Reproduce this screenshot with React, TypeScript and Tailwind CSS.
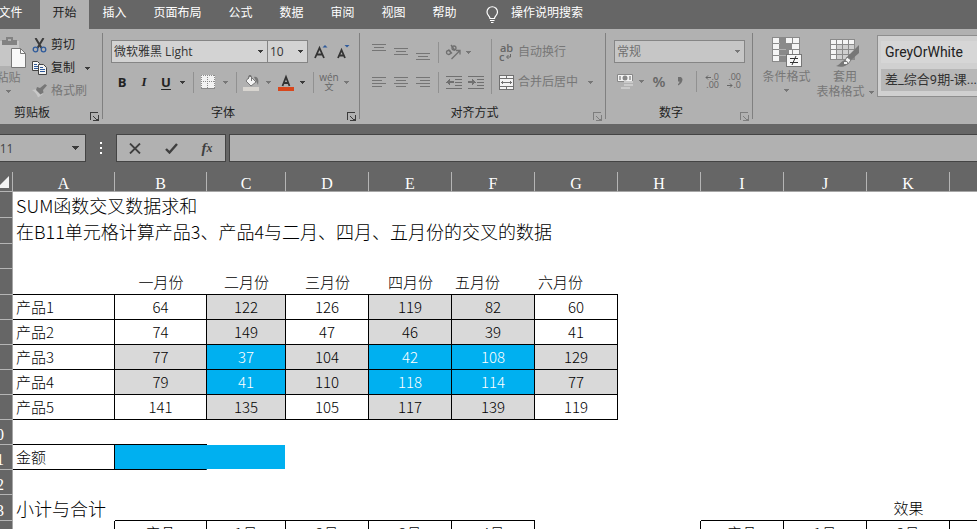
import type { ReactNode } from "react";

type Tone = "plain" | "gray" | "blue";

function Arrow({ muted = false }: { muted?: boolean }) {
  return (
    <svg width="5" height="3" viewBox="0 0 5 3" shapeRendering="crispEdges" className={`shrink-0 ${muted ? "text-[#777]" : "text-[#3b3b3b]"}`} aria-hidden="true">
      <path d="M0 0h5v1H4v1H3v1H2V2H1V1H0z" fill="currentColor" />
    </svg>
  );
}

function Tool({ label, className, children }: { label: string; className: string; children: ReactNode }) {
  return (
    <button type="button" aria-label={label} className={`flex h-6 shrink-0 items-center justify-center ${className}`}>
      {children}
    </button>
  );
}

function Divider() {
  return <div className="mt-1 mb-[5px] w-px shrink-0 bg-[#808080]" />;
}

function Sep() {
  return <div className="h-[21px] w-px shrink-0 bg-[#919191]" />;
}

function Launcher({ label, muted = false }: { label: string; muted?: boolean }) {
  return (
    <button type="button" aria-label={label} className={`flex h-4 w-4 items-end justify-center ${muted ? "text-[#7d7d7d]" : "text-[#3b3b3b]"}`}>
      <svg width="9" height="9" viewBox="0 0 9 9" shapeRendering="crispEdges" fill="currentColor" aria-hidden="true">
        <path d="M0 0h8v1H1v7H0zM8 3h1v6H3V8h3V7H5V6H4V5H3V4h1v1h1v1h1v1h2z" />
      </svg>
    </button>
  );
}

function Group({ title, className, muted = false, children }: { title: string; className: string; muted?: boolean; children: ReactNode }) {
  return (
    <section aria-label={title} className={`flex h-[95px] shrink-0 flex-col ${className}`}>
      <div className="h-[74px]">{children}</div>
      <div className="flex h-5 items-center">
        <h2 className="flex-1 text-center">{title}</h2>
        <Launcher label={`${title}设置`} muted={muted} />
      </div>
    </section>
  );
}

function Picker({ label, value, className, muted = false }: { label: string; value: string; className: string; muted?: boolean }) {
  return (
    <div className={`relative h-[23px] shrink-0 border border-[#858585] ${muted ? "bg-[#c6c6c6] text-[#707070]" : "bg-[#d3d3d3] text-[#333]"} ${className}`}>
      <select aria-label={label} className="h-full w-full appearance-none pl-0.5 text-[12px]" defaultValue={value}>
        <option>{value}</option>
      </select>
      <span className="pointer-events-none absolute top-[9px] right-1">
        <Arrow muted={muted} />
      </span>
    </div>
  );
}

function Lines({ rows }: { rows: [number, number, number][] }) {
  return (
    <svg width="14" height="16" viewBox="0 0 14 16" shapeRendering="crispEdges" fill="#757575" aria-hidden="true">
      {rows.map(([x, y, w]) => (
        <rect key={y} x={x} y={y} width={w} height="1" />
      ))}
    </svg>
  );
}

function ClipboardGroup() {
  return (
    <Group title="剪贴板" className="-ml-[22px] w-[124px]">
      <div className="flex pt-2">
        <button type="button" className="flex w-[50px] shrink-0 flex-col items-center pl-[11px] text-[#777]">
          <svg width="36" height="31" viewBox="0 0 36 31" className="shrink-0" aria-hidden="true">
            <path d="M2 4h26v25H2z" fill="#c6c6c6" />
            <path d="M11 3h4V0h7v3h4v5H11z" fill="#828282" />
            <path d="M17 2h3v2h-3z" fill="#b1b1b1" />
            <path d="M20.500 11.500h9l5 5v14h-14z" fill="#f8f8f8" stroke="#777" />
            <path d="M29.500 11.500v5h5" fill="none" stroke="#777" />
          </svg>
          <span className="mt-0.5 leading-4">粘贴</span>
          <span className="mt-1"><Arrow muted /></span>
        </button>
        <div className="flex flex-col gap-[7px] pl-1">
          <button type="button" className="flex h-4 items-center gap-1">
            <svg width="15" height="15" viewBox="0 0 15 15" aria-hidden="true">
              <path d="M3.500 0 9.500 10M11.500 0l-6 10" stroke="#3b3b3b" strokeWidth="2" fill="none" />
              <circle cx="3.500" cy="11.500" r="2.300" fill="none" stroke="#2f5b9b" strokeWidth="1.300" />
              <circle cx="11.500" cy="11.500" r="2.300" fill="none" stroke="#2f5b9b" strokeWidth="1.300" />
            </svg>
            剪切
          </button>
          <button type="button" className="flex h-4 items-center gap-1">
            <svg width="15" height="14" viewBox="0 0 15 14" aria-hidden="true">
              <path d="M.5.500h5l2 2v7h-7z" fill="#f5f5f5" stroke="#444" />
              <path d="M2 3.500h3M2 5.500h4M2 7.500h4" stroke="#2f5b9b" />
              <path d="M6.500 3.500h5l3 3v7h-8z" fill="#f5f5f5" stroke="#444" />
              <path d="M8 6.500h3M8 8.500h5M8 10.500h5" stroke="#2f5b9b" />
            </svg>
            复制
            <span className="pl-[6px]"><Arrow /></span>
          </button>
          <button type="button" className="flex h-4 items-center gap-1 text-[#777]">
            <svg width="15" height="14" viewBox="0 0 15 14" aria-hidden="true">
              <path d="m0 6 6-1 5 5-5 3.500C5 10 3 8 0 6z" fill="#c8c8c8" />
              <path d="m5 3 3 1 5-4 2 1.500-4 4.500.500 2.500-3 2L4 6z" fill="#777" />
            </svg>
            格式刷
          </button>
        </div>
      </div>
    </Group>
  );
}

function FontGroup() {
  return (
    <Group title="字体" className="w-64">
      <div className="flex pt-[11px] pl-2">
        <Picker label="字体名称" value="微软雅黑 Light" className="w-[157px]" />
        <Picker label="字号" value="10" className="-ml-px w-[41px]" />
        <Tool label="增大字号" className="ml-0.5 w-[22px]">
          <svg width="14" height="16" viewBox="0 0 14 16" aria-hidden="true">
            <path d="M1 14 5.500 4 10 14M2.700 10.500h5.600" fill="none" stroke="#333" strokeWidth="1.800" />
            <path d="M8.500 3.500 11 1l2.500 2.500z" fill="#2f5b9b" />
          </svg>
        </Tool>
        <Tool label="减小字号" className="w-[22px]">
          <svg width="14" height="16" viewBox="0 0 14 16" aria-hidden="true">
            <path d="M2 14 5.500 6 9 14M3.500 11.500h4" fill="none" stroke="#333" strokeWidth="1.800" />
            <path d="M8.500 1H13.500L11 3.500z" fill="#2f5b9b" />
          </svg>
        </Tool>
      </div>
      <div className="mt-[6px] flex items-center pl-2 font-['Open_Sans',sans-serif] text-[13px] text-[#222]">
        <Tool label="加粗" className="w-[22px] font-bold">B</Tool>
        <Tool label="倾斜" className="w-[22px] font-['Liberation_Serif',serif] font-bold italic">I</Tool>
        <Tool label="下划线" className="w-[22px] font-bold underline underline-offset-2">U</Tool>
        <Tool label="下划线样式" className="w-[11px]"><Arrow /></Tool>
        <span className="w-[5px]" />
        <Sep />
        <Tool label="边框" className="w-[28px]">
          <svg width="14" height="14" viewBox="0 0 14 14" shapeRendering="crispEdges" aria-hidden="true">
            <path d="M0 0h14v13H0z" fill="#f3f3f3" />
            <path d="M0 .5h14M0 6.500h14M.5 0v13M6.500 0v13M13.500 0v13" stroke="#8b8b8b" strokeDasharray="1 1" />
            <path d="M0 13h14v1H0z" fill="#8b8b8b" />
          </svg>
        </Tool>
        <Tool label="边框样式" className="w-[7px]"><Arrow muted /></Tool>
        <span className="w-[7px]" />
        <Sep />
        <Tool label="填充颜色" className="w-[28px]">
          <svg width="17" height="17" viewBox="0 0 17 17" aria-hidden="true">
            <path d="M0 13h16v4H0z" fill="#d8d5d0" />
            <path d="m7 2 6 6-5 4-5-5z" fill="#f3f3f3" stroke="#777" />
            <path d="M5.500 5V2.500C5.500 1 8.500 1 8.500 2.500V7" fill="none" stroke="#777" />
            <path d="M11 3c4-1 5 3 4 8l-2-4z" fill="#777" />
          </svg>
        </Tool>
        <Tool label="填充颜色选项" className="w-[7px]"><Arrow muted /></Tool>
        <Tool label="字体颜色" className="w-[28px]">
          <svg width="16" height="17" viewBox="0 0 16 17" aria-hidden="true">
            <path d="M4.500 12 8 3l3.500 9M5.500 9h5" fill="none" stroke="#333" strokeWidth="1.800" />
            <path d="M0 13h16v4H0z" fill="#d8471c" />
          </svg>
        </Tool>
        <Tool label="字体颜色选项" className="w-[5px]"><Arrow /></Tool>
        <span className="w-2" />
        <Sep />
        <Tool label="显示拼音" className="w-[30px] flex-col text-[#666]">
          <span className="text-[10px] leading-[10px]">wén</span>
          <span className="font-['Noto_Sans_CJK_SC',sans-serif] text-[9px] leading-[10px]">文</span>
        </Tool>
        <Arrow muted />
      </div>
    </Group>
  );
}

function AlignGroup() {
  return (
    <Group title="对齐方式" className="w-[245px]" muted>
      <div className="flex text-[#777]">
        <div className="w-[131px] pt-[11px] pl-2">
          <div className="flex items-center">
            <Tool label="顶端对齐" className="w-[22px]"><Lines rows={[[0, 0, 14], [2, 3, 10], [0, 6, 14]]} /></Tool>
            <Tool label="垂直居中" className="w-[22px]"><Lines rows={[[0, 4, 14], [2, 7, 10], [0, 10, 14]]} /></Tool>
            <Tool label="底端对齐" className="w-[22px]"><Lines rows={[[0, 9, 14], [2, 12, 10], [0, 15, 14]]} /></Tool>
            <span className="w-1" />
            <Sep />
            <Tool label="方向" className="w-[27px]">
              <svg width="18" height="18" viewBox="0 0 18 18" className="overflow-visible" fill="none" stroke="#707070" strokeWidth="1.300" aria-hidden="true">
                <circle cx="4.500" cy="9.500" r="2" />
                <path d="m4.500 6.500 3.500 4M7 2l4 5.500" />
                <circle cx="10" cy="5" r="2" />
                <path d="m7.500 16 8-8M12 7.500h4v4" />
              </svg>
            </Tool>
            <Arrow muted />
          </div>
          <div className="mt-1.5 flex items-center">
            <Tool label="左对齐" className="w-[22px]"><Lines rows={[[0, 3, 14], [0, 6, 10], [0, 9, 14], [0, 12, 10]]} /></Tool>
            <Tool label="居中" className="w-[22px]"><Lines rows={[[0, 3, 14], [2, 6, 10], [0, 9, 14], [2, 12, 10]]} /></Tool>
            <Tool label="右对齐" className="w-[22px]"><Lines rows={[[0, 3, 14], [4, 6, 10], [0, 9, 14], [4, 12, 10]]} /></Tool>
            <span className="w-1" />
            <Sep />
            <span className="w-1" />
            <Tool label="减少缩进量" className="w-[22px]">
              <svg width="16" height="13" viewBox="0 0 16 13" shapeRendering="crispEdges" fill="#707070" aria-hidden="true">
                <path d="M0 0h16v1H0zM9 3h7v1H9zM9 6h7v1H9zM9 9h7v1H9zM0 12h16v1H0zM0 6h1V5h1V4h1V3h1v2h4v2H4v2H3V8H2V7H0z" />
              </svg>
            </Tool>
            <Tool label="增加缩进量" className="w-[22px]">
              <svg width="16" height="13" viewBox="0 0 16 13" shapeRendering="crispEdges" fill="#707070" aria-hidden="true">
                <path d="M0 0h16v1H0zM9 3h7v1H9zM9 6h7v1H9zM9 9h7v1H9zM0 12h16v1H0zM8 6H7V5H6V4H5V3H4v2H0v2h4v2h1V8h1V7h2z" />
              </svg>
            </Tool>
          </div>
        </div>
        <div className="mt-[10px] h-[55px] w-px bg-[#919191]" />
        <div className="flex flex-1 flex-col gap-1.5 pt-[11px] pl-[7px]">
          <button type="button" className="flex h-6 items-center gap-1">
            <span className="w-[15px] font-['Open_Sans',sans-serif] text-[11px] leading-[9px] font-semibold text-[#666]">
              <span className="block">ab</span>
              <span className="flex items-center gap-0.5">c
                <svg width="5" height="5" viewBox="0 0 5 5" aria-hidden="true"><path d="M4.500 0v3H1M2.500 1 .5 3l2 2" fill="none" stroke="#666" /></svg>
              </span>
            </span>
            自动换行
          </button>
          <button type="button" className="flex h-6 items-center gap-1">
            <svg width="15" height="15" viewBox="0 0 15 15" shapeRendering="crispEdges" aria-hidden="true">
              <path d="M.5.500h14v14H.5z" fill="#f4f4f4" stroke="#707070" />
              <path d="M0 3.500h15M0 11.500h15M7.500 0v3M7.500 11v4M2 7.500h11M3.500 6v3M11.500 6v3" stroke="#707070" />
            </svg>
            合并后居中
            <span className="pl-[6px]"><Arrow muted /></span>
          </button>
        </div>
      </div>
    </Group>
  );
}

function DecimalArrow({ right = false }: { right?: boolean }) {
  return (
    <svg width="6" height="5" viewBox="0 0 6 5" fill="none" stroke="#666" aria-hidden="true">
      <path d={right ? "M0 2.500h5M3 .5l2 2-2 2" : "M6 2.500H1M3 .5l-2 2 2 2"} />
    </svg>
  );
}

function NumberGroup() {
  return (
    <Group title="数字" className="w-[146px]" muted>
      <div className="px-2 pt-[11px]">
        <Picker label="数字格式" value="常规" className="w-[131px]" muted />
      </div>
      <div className="mt-[6px] flex items-center pl-2 font-['Open_Sans',sans-serif] text-[#666]">
        <Tool label="会计数字格式" className="w-[22px]">
          <svg width="17" height="17" viewBox="0 0 17 17" aria-hidden="true">
            <path d="M.5 1.500h15v7H.5z" fill="#f4f4f4" stroke="#888" />
            <circle cx="8" cy="5" r="2.500" fill="#888" />
            <path d="M2 3h2v4H2zM12 3h2v4h-2z" fill="#aaa" />
            <path d="M7 8h9v2H7zM7 11h9v2H7zM4 14h9v2H4z" fill="#cacaca" />
          </svg>
        </Tool>
        <Tool label="会计格式选项" className="w-[11px]"><Arrow muted /></Tool>
        <Tool label="百分比样式" className="ml-[3px] w-[18px] text-[15px] font-semibold">%</Tool>
        <Tool label="千位分隔样式" className="ml-px w-[22px]">
          <svg width="6" height="9" viewBox="0 0 6 9" aria-hidden="true">
            <path d="M1 0h3l1.500 2C5.500 5 4 7 1 8.500V7c1-.7 1.500-1.500 1.500-2.500H1z" fill="#707070" />
          </svg>
        </Tool>
        <span className="w-[5px]" />
        <Sep />
        <Tool label="增加小数位数" className="w-[22px] flex-col text-[9px] leading-[8px]">
          <span className="flex w-full items-center justify-end"><DecimalArrow />.0</span>
          <span className="block w-full text-right">.00</span>
        </Tool>
        <Tool label="减少小数位数" className="w-[22px] flex-col text-[9px] leading-[8px]">
          <span className="block w-full text-right">.00</span>
          <span className="flex w-full items-center justify-end"><DecimalArrow right />.0</span>
        </Tool>
      </div>
    </Group>
  );
}

function StylesGroup() {
  return (
    <section aria-label="样式" className="flex min-w-0 flex-1 text-[#777]">
      <button type="button" className="ml-[7px] flex w-[53px] shrink-0 flex-col items-center pt-2">
        <svg width="32" height="32" viewBox="0 0 32 32" shapeRendering="crispEdges" className="shrink-0" aria-hidden="true">
          <path d="M1 0h28v25H1z" fill="#8a8a8a" />
          <path d="M2 1h6v5H2zM2 7h6v5H2zM2 13h6v5H2zM2 19h6v5H2zM15 1h6v5h-6zM22 1h6v5h-6zM21 7h7v5h-7zM18 13h3v5h-3zM22 13h6v5h-6z" fill="#f5f5f5" />
          <path d="M8 6h1v1H8zM8 12h7v1H8zM8 18h7v1H8z" fill="#b1b1b1" />
          <path d="M15.500 17.500h15v12h-15z" fill="#f8f8f8" stroke="#777" />
          <path d="M19 21.500h8M19 25.500h8" stroke="#333" />
          <path d="m25 19-4 9" stroke="#333" shapeRendering="auto" />
        </svg>
        <span className="leading-4">条件格式</span>
        <span className="mt-1"><Arrow muted /></span>
      </button>
      <button type="button" className="ml-0.5 flex w-[60px] shrink-0 flex-col items-center pt-2">
        <svg width="30" height="32" viewBox="0 0 30 32" className="shrink-0" aria-hidden="true">
          <path d="M0 2h25v21H0z" fill="#8a8a8a" />
          <path d="M1 3h5v4H1zM7 3h5v4H7zM13 3h5v4h-5zM19 3h5v4h-5zM1 8h5v4H1zM1 13h5v4H1zM1 18h5v4H1z" fill="#f5f5f5" />
          <path d="M7 8h5v4H7zM13 8h5v4h-5zM19 8h5v4h-5zM7 13h5v4H7zM13 13h5v4h-5zM19 13h5v4h-5zM7 18h5v4H7zM13 18h5v4h-5z" fill="#cfcfcf" />
          <path d="M29 8v8l-8 7-4-3z" fill="#777" />
          <path d="m17 20 4 3-3 4h-5z" fill="#f4f4f4" stroke="#777" />
          <path d="M6 29c4-1 5-5 9-6l3 2c0 4-6 6-12 4z" fill="#777" />
          <path d="M14 25h3v2h-3z" fill="#f4f4f4" />
        </svg>
        <span className="leading-4">套用</span>
        <span className="flex items-center gap-1 leading-[14px] whitespace-nowrap">表格格式 <Arrow muted /></span>
      </button>
      <div className="mt-1.5 ml-0.5 flex h-[62px] min-w-0 flex-1 flex-col gap-[6px] overflow-hidden border border-r-0 border-[#8e8e8e] bg-[#d0d0d0] py-[5px] pl-[3px] font-['Roboto','Noto_Sans_CJK_SC',sans-serif] text-[14px] whitespace-nowrap text-[#222]">
        <button type="button" className="h-[22px] shrink-0 bg-[#d6d6d6] pl-1 text-left">GreyOrWhite</button>
        <button type="button" className="h-[22px] shrink-0 bg-[#b7b7b7] pl-1 text-left text-[13px] text-[#333]">差_综合9期-课...</button>
      </div>
    </section>
  );
}

function Tabs() {
  const tabs: [string, string][] = [
    ["插入", "w-[51px]"],
    ["页面布局", "w-[75px]"],
    ["公式", "w-[51px]"],
    ["数据", "w-[51px]"],
    ["审阅", "w-[51px]"],
    ["视图", "w-[51px]"],
    ["帮助", "w-[51px]"],
  ];
  return (
    <nav className="flex h-[29px] items-stretch pb-[3px] text-white">
      <button type="button" className="-ml-5 w-[60px] shrink-0 pl-px text-center">文件</button>
      <button type="button" className="-mb-[3px] w-[49px] shrink-0 bg-[#b1b1b1] pb-[3px] text-[#222]">开始</button>
      {tabs.map(([name, width]) => (
        <button type="button" key={name} className={`shrink-0 ${width}`}>{name}</button>
      ))}
      <label className="ml-4 flex flex-1 items-center gap-3">
        <svg width="13" height="18" viewBox="0 0 13 18" fill="none" stroke="#fff" aria-hidden="true" className="mt-[3px] shrink-0">
          <path d="M4 12.500c0-2.500-3-3-3-6.500a5.200 5.200 0 0 1 10.500 0c0 3.500-3 4-3 6.500zM4 14.500h4.500M5 16.500h2.500" strokeWidth="1.200" />
        </svg>
        <input aria-label="操作说明搜索" placeholder="操作说明搜索" className="w-full min-w-0 bg-transparent placeholder:text-white" />
      </label>
    </nav>
  );
}

function FormulaBar() {
  return (
    <div className="flex h-12 pt-[10px]">
      <div className="relative -ml-[22px] h-7 w-[108px] shrink-0 border border-[#444] bg-[#b1b1b1]">
        <input aria-label="名称框" defaultValue="B11" className="h-full w-full bg-transparent pl-[13px] font-['Open_Sans',sans-serif] text-[12px] text-[#444]" />
        <svg width="7" height="4" viewBox="0 0 7 4" shapeRendering="crispEdges" className="absolute top-[11px] right-[6px]" aria-hidden="true">
          <path d="M0 0h7v1H6v1H5v1H4v1H3V3H2V2H1V1H0z" fill="#3b3b3b" />
        </svg>
      </div>
      <div className="flex h-7 w-[30px] shrink-0 flex-col items-center justify-center gap-[3px]">
        <i className="h-0.5 w-0.5 bg-white" />
        <i className="h-0.5 w-0.5 bg-white" />
        <i className="h-0.5 w-0.5 bg-white" />
      </div>
      <div className="mr-[3px] flex h-7 shrink-0 items-center border border-[#444] bg-[#b1b1b1]">
        <Tool label="取消" className="w-9">
          <svg width="12" height="11" viewBox="0 0 12 11" aria-hidden="true"><path d="m1 .5 10 10M11 .5l-10 10" stroke="#3f3f3f" strokeWidth="1.800" /></svg>
        </Tool>
        <Tool label="输入" className="w-9">
          <svg width="13" height="11" viewBox="0 0 13 11" aria-hidden="true"><path d="m1 6 3.500 3.500L12 1" fill="none" stroke="#3f3f3f" strokeWidth="2.400" /></svg>
        </Tool>
        <Tool label="插入函数" className="w-9 font-['Liberation_Serif',serif] text-[15px] font-bold text-[#3f3f3f] italic">
          f<sub className="bottom-0 text-[12px]">x</sub>
        </Tool>
      </div>
      <input aria-label="编辑栏" className="h-7 min-w-0 flex-1 border border-r-0 border-[#444] bg-[#b1b1b1] px-2" />
    </div>
  );
}

const columns = ["A", "B", "C", "D", "E", "F", "G", "H", "I", "J", "K"];
const widths = ["w-[102px]", "w-[92px]", "w-[79px]", "w-[83px]", "w-[83px]", "w-[83px]", "w-[83px]", "w-[83px]", "w-[83px]", "w-[83px]", "w-[83px]"];
const months = ["一月份", "二月份", "三月份", "四月份", "五月份", "六月份"];
const products: [string, number[]][] = [
  ["产品1", [64, 122, 126, 119, 82, 60]],
  ["产品2", [74, 149, 47, 46, 39, 41]],
  ["产品3", [77, 37, 104, 42, 108, 129]],
  ["产品4", [79, 41, 110, 118, 114, 77]],
  ["产品5", [141, 135, 105, 117, 139, 119]],
];
const tones: Record<Tone, string> = {
  plain: "bg-white",
  gray: "bg-[#d9d9d9]",
  blue: "bg-[#00b0f0] text-white",
};

function toneOf(row: number, col: number): Tone {
  const inRow = row === 2 || row === 3;
  const inCol = col === 1 || col === 3 || col === 4;
  if (inRow && inCol) return "blue";
  return inRow || inCol ? "gray" : "plain";
}

function RowHead({ n }: { n?: number }) {
  return (
    <th scope="row" className="border-r border-b border-r-[#a6a6a6] border-b-[#b5b5b5] bg-[#666] p-0 align-bottom font-['Liberation_Serif',serif] text-[16px] leading-[18px] font-normal text-white">
      {n && <div className="flex justify-end overflow-hidden pr-2">{n}</div>}
    </th>
  );
}

function Sheet() {
  const line = "border-r border-b border-black";
  const summary = ["产品", "1月", "2月", "3月", "4月"];
  return (
    <table className="w-full table-fixed border-separate border-spacing-0 bg-white font-['Noto_Sans_CJK_SC',sans-serif] text-[15px] leading-5 font-light whitespace-nowrap text-black">
      <colgroup>
        <col className="w-[13px]" />
        {columns.map((c, i) => <col key={c} className={widths[i]} />)}
        <col />
      </colgroup>
      <thead>
        <tr className="h-5 bg-[#666] text-white">
          <td className="border-r border-b border-[#b5b5b5] p-0 align-bottom">
            <svg width="9" height="12" viewBox="0 0 9 12" className="mb-[3px] block" aria-hidden="true"><path d="M9 0v12H0V9z" fill="#f3f3f3" /></svg>
          </td>
          {columns.map((c) => (
            <th key={c} scope="col" className="border-r border-b border-r-[#b5b5b5] border-b-[#a6a6a6] p-0 pt-1 font-['Liberation_Serif',serif] text-[16px] leading-[15px] font-normal">{c}</th>
          ))}
          <td className="border-b border-[#a6a6a6] p-0" />
        </tr>
      </thead>
      <tbody>
        <tr className="h-[26px] text-[18px]"><RowHead /><td className="py-0 pr-0 pl-[3px]">SUM函数交叉数据求和</td></tr>
        <tr className="h-[26px] text-[18px]"><RowHead /><td className="py-0 pr-0 pl-[3px]">在B11单元格计算产品3、产品4与二月、四月、五月份的交叉的数据</td></tr>
        <tr className="h-[25px]"><RowHead /></tr>
        <tr className="h-[26px]">
          <RowHead />
          <td className="border-b border-black p-0" />
          {months.map((m, i) => (
            <td key={m} className={`border-b border-black py-0 pr-0 ${i > 3 ? "pl-[3px] text-left" : "pl-0 text-center"}`}>{m}</td>
          ))}
        </tr>
        {products.map(([name, values], r) => (
          <tr key={name} className="h-[25px]">
            <RowHead />
            <td className={`py-0 pr-0 pl-[3px] ${line}`}>{name}</td>
            {values.map((v, c) => (
              <td key={months[c]} className={`p-0 text-center ${line} ${tones[toneOf(r, c)]}`}>{v}</td>
            ))}
          </tr>
        ))}
        <tr className="h-[25px]">
          <RowHead n={10} />
          <td className="border-b border-black p-0" />
          <td className="border-b border-black p-0" />
        </tr>
        <tr className="h-[25px]">
          <RowHead n={11} />
          <td className={`py-0 pr-0 pl-[3px] ${line}`}>金额</td>
          <td className="border-r border-b border-r-[#00b0f0] border-b-black bg-[#00b0f0] p-0" />
          <td className="border-r border-b border-white bg-[#00b0f0] p-0" />
        </tr>
        <tr className="h-[25px]"><RowHead n={12} /></tr>
        <tr className="h-[26px]">
          <RowHead n={13} />
          <td className="border-b border-white py-0 pr-0 pl-[3px] text-[18px]">小计与合计</td>
          <td colSpan={5} className="border-b border-black p-0" />
          <td colSpan={2} className="p-0" />
          <td colSpan={2} className="border-b border-black p-0" />
          <td className="border-b border-black p-0 text-center">效果</td>
          <td className="border-b border-black p-0" />
        </tr>
        <tr className="h-[25px]">
          <RowHead />
          <td className="border-r border-black p-0" />
          {summary.map((s) => <td key={s} className={`p-0 text-center ${line}`}>{s}</td>)}
          <td className="p-0" />
          <td className="border-r border-black p-0" />
          {summary.slice(0, 3).map((s) => <td key={s} className={`p-0 text-center ${line}`}>{s}</td>)}
          <td className="border-b border-black p-0" />
        </tr>
      </tbody>
    </table>
  );
}

export default function App() {
  return (
    <main className="h-screen overflow-hidden bg-[#666] font-['Open_Sans','Noto_Sans_CJK_SC',sans-serif] text-[12px] leading-4 text-[#222]">
      <Tabs />
      <div className="flex h-[95px] overflow-hidden bg-[#b1b1b1]">
        <ClipboardGroup />
        <Divider />
        <FontGroup />
        <Divider />
        <AlignGroup />
        <Divider />
        <NumberGroup />
        <Divider />
        <StylesGroup />
      </div>
      <FormulaBar />
      <Sheet />
    </main>
  );
}
